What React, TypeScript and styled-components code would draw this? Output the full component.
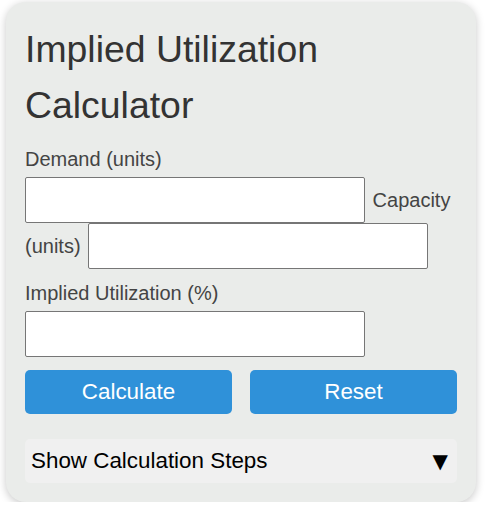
import React from "react";
import styled, { createGlobalStyle } from "styled-components";

const Global = createGlobalStyle`
  html, body { margin: 0; padding: 0; background: #ffffff; }
  body { font-family: "Liberation Sans", Arial, sans-serif; }
  * { box-sizing: border-box; }
`;

const Card = styled.div`
  width: 470px;
  margin: 2px 0 0 6px;
  padding: 19px;
  background: #eaecea;
  border-radius: 20px;
  box-shadow: 0 2px 8px rgba(0, 0, 0, 0.22);
  color: #444;
`;

const Title = styled.h2`
  margin: 0 0 8px;
  font-size: 37.4px;
  line-height: 56px;
  font-weight: normal;
  color: #333;
`;

const FieldFlow = styled.div`
  font-size: 20px;
  line-height: 36px;
`;

const ResultFlow = styled(FieldFlow)`
  margin-top: 6px;
`;

const Label = styled.label`
  color: #444;
  margin-right: 2px;
`;

const Field = styled.input`
  display: inline-block;
  vertical-align: baseline;
  width: 340px;
  height: 46px;
  margin: 0 2px 0 0;
  padding: 0 10px;
  border: 1px solid #767676;
  border-radius: 2px;
  background: #fff;
  font-family: "Liberation Sans", Arial, sans-serif;
  font-size: 20px;
  color: #000;
`;

const ButtonRow = styled.div`
  display: flex;
  gap: 18px;
  margin-top: 13px;
`;

const Button = styled.button`
  flex: 1;
  height: 44px;
  border: none;
  border-radius: 5px;
  background: #2f91d9;
  color: #fff;
  font-family: "Liberation Sans", Arial, sans-serif;
  font-size: 22.4px;
  padding: 0;
  cursor: pointer;
`;

const Steps = styled.div`
  margin-top: 25px;
  height: 44px;
  display: flex;
  align-items: center;
  justify-content: space-between;
  padding: 0 9px 0 6px;
  background: #f0f0f0;
  border-radius: 5px;
  font-size: 22.4px;
  color: #000;
`;

const Arrow = styled.span`
  font-family: "DejaVu Sans", sans-serif;
  font-size: 20px;
`;

export default function App() {
  return (
    <>
      <Global />
      <Card>
        <Title>Implied Utilization Calculator</Title>
        <FieldFlow>
          <Label htmlFor="demand">Demand (units)</Label> <Field id="demand" type="text" />{" "}
          <Label htmlFor="capacity">Capacity (units)</Label> <Field id="capacity" type="text" />
        </FieldFlow>
        <ResultFlow>
          <Label htmlFor="util">Implied Utilization (%)</Label> <Field id="util" type="text" />
        </ResultFlow>
        <ButtonRow>
          <Button>Calculate</Button>
          <Button>Reset</Button>
        </ButtonRow>
        <Steps>
          <span>Show Calculation Steps</span>
          <Arrow>▼</Arrow>
        </Steps>
      </Card>
    </>
  );
}
